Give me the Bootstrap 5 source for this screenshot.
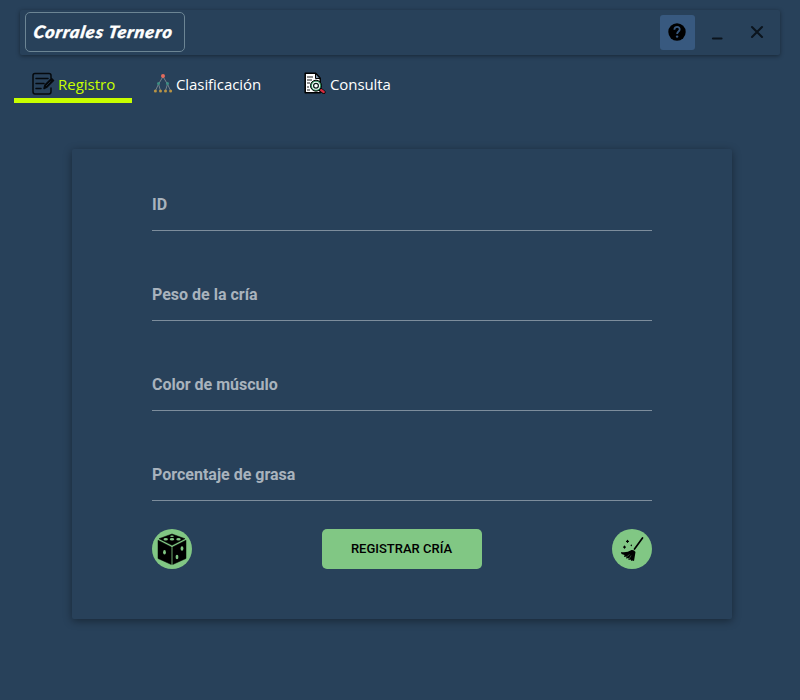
<!DOCTYPE html>
<html lang="es">
<head>
<meta charset="utf-8">
<meta name="viewport" content="width=device-width, initial-scale=1">
<title>Corrales Ternero</title>
<link href="https://cdn.jsdelivr.net/npm/bootstrap@5.3.0/dist/css/bootstrap.min.css" rel="stylesheet">
<style>
body{background:#28415a;font-family:Roboto,sans-serif;width:800px;height:700px;overflow:hidden}
.topbar{margin:10px 20px 0;height:45px;padding:2px 5px;border-radius:2px;box-shadow:0 1px 4px rgba(0,0,0,.4)}
.brand-box{width:160px;height:40px;border:1px solid #6c8594;border-radius:5px;padding:0 0 0 7px;color:#fff;font:italic 900 17px/38px Lato,sans-serif;letter-spacing:.9px;white-space:nowrap}
.brand-box span{display:inline-block;transform-origin:0 60%;transform:scaleX(1.06) skewX(-9deg);-webkit-text-stroke:.4px #fff}
.win-group{gap:5px;margin-top:3px}
.win-btn{width:35px;height:35px;padding:0;border:0;border-radius:3px}
.win-btn.help{background:#38597f;padding:0 1px 1px 0}
.tabs{margin:12px 0 0 14px;height:36px;font:15px/34px "Open Sans","Noto Sans",sans-serif}
.tab-item{color:#fff;height:36px;padding:0;border-radius:0;border-bottom:5px solid transparent}
.tab-item:hover{color:#fff}
.tab-item.active{color:#c8ff00;border-color:#c8ff00}
.tab-item span{padding-top:2px;line-height:32px}
.t2 span,.t3 span{letter-spacing:-.08px}
.tab-item svg{flex:none;margin-right:3px}
.t1{width:118px;padding-left:17px}.t2{width:150px;padding-left:21px}.t3{width:130px;padding-left:22px}
.t3 svg{margin-right:4px}
.form-panel{width:660px;height:470px;margin:46px 0 0 72px;padding:32px 80px 0;border-radius:2px;box-shadow:0 2px 9px rgba(0,0,0,.4)}
.line-field{height:50px;margin-bottom:40px;padding:0 0 2px;border:0;border-bottom:1px solid #7d8d9c;border-radius:0;background:transparent;color:#fff;font-weight:700;font-size:16px}
.line-field:focus{background:transparent;box-shadow:none;color:#fff}
.line-field::placeholder{color:#a9b3bd;opacity:1}
.last{margin-bottom:28px}
.round-btn{width:40px;height:40px;padding:0;border:0;background:#81c784}
.save-btn{width:160px;height:40px;border:0;border-radius:5px;background:#81c784;color:#000;font-weight:500;font-size:13px;padding:0 1px 0 0}
</style>
</head>
<body>
<header class="topbar d-flex align-items-start justify-content-between">
  <div class="brand-box"><span>Corrales Ternero</span></div>
  <div class="d-flex win-group">
    <button class="btn win-btn help d-flex align-items-center justify-content-center" aria-label="Ayuda"><svg width="19" height="19" viewBox="0 0 19 19"><circle cx="9" cy="9" r="8.7" fill="#000"/><path d="M6.4 6.700C6.300 2.700 12.100 3 11.700 6.600C11.500 8.500 9.100 8.700 9.100 10.900" fill="none" stroke="#38597f" stroke-width="1.8"/><circle cx="9.100" cy="13.600" r="1.2" fill="#38597f"/></svg></button>
    <button class="btn win-btn" aria-label="Minimizar"><svg class="d-block" width="35" height="35" viewBox="0 0 35 35"><path d="M13 23.500h8.500" stroke="#0b141d" stroke-width="2.200" stroke-linecap="round"/></svg></button>
    <button class="btn win-btn" aria-label="Cerrar"><svg class="d-block" width="35" height="35" viewBox="0 0 35 35"><path d="M12 12l10 10M22 12L12 22" stroke="#0b141d" stroke-width="2.100" stroke-linecap="round"/></svg></button>
  </div>
</header>
<nav class="tabs d-flex nav">
  <a class="nav-link tab-item active t1 d-flex align-items-center" href="#"><svg width="24" height="24" viewBox="0 0 24 24"><g fill="none" stroke="#05090d" stroke-width="1.500" stroke-linecap="round" stroke-linejoin="round"><path d="M20 7V4.500Q20 2.500 18 2.500H4Q2 2.500 2 4.500V20.500Q2 23 4 23H18Q20 23 20 20.500V17M5 7.500h12M5 12.500h8M5 17.500h5"/><path d="M13 17.500l1-3.500 6.500-6.500 2 2-6.500 6.500z" fill="#05090d"/></g><path d="M15 15l4.500-4.500" stroke="#28415a" stroke-width=".6"/></svg><span>Registro</span></a>
  <a class="nav-link tab-item t2 d-flex align-items-center" href="#"><svg width="20" height="20" viewBox="0 0 20 20"><g transform="translate(0 .6)"><path d="M10 3L5.500 10.500 2.500 17M5.500 10.500L7.500 17M10 3L14.500 10.500 12.500 17M14.500 10.500L17.500 17" fill="none" stroke="#73828b"/><circle cx="10" cy="2.500" r="2" fill="#e36b5d"/><g fill="#3c8e83"><circle cx="5.500" cy="10" r="1.500"/><circle cx="14.500" cy="10" r="1.500"/></g><g fill="#b99445"><circle cx="2.400" cy="17.300" r="1.500"/><circle cx="7.500" cy="17.300" r="1.500"/><circle cx="12.500" cy="17.300" r="1.500"/><circle cx="17.600" cy="17.300" r="1.500"/></g></g></svg><span>Clasificación</span></a>
  <a class="nav-link tab-item t3 d-flex align-items-center" href="#"><svg width="22" height="22" viewBox="0 0 22 22"><path d="M1.200 1.200h10.500l4.500 5v14.500H1.200z" fill="#fff" stroke="#000" stroke-width="1.500" stroke-linejoin="round"/><path d="M11.500 1.500v5h4.500z" fill="#8298ac" stroke="#000"/><path d="M3 5h6M3 8h5M3 11h3M3 15h2M3 18h3" stroke="#000" stroke-width=".9"/><path d="M16.200 17.500l3.600 2.700" stroke="#000" stroke-width="3.600" stroke-linecap="round"/><path d="M17 18l2.700 2" stroke="#d52c3f" stroke-width="2.300" stroke-linecap="round"/><circle cx="12" cy="13.700" r="5.500" fill="#3c9a69" stroke="#000"/><circle cx="12" cy="13.700" r="4" fill="#fff"/><circle cx="12" cy="13.700" r="2.400" fill="none" stroke="#061c17" stroke-width="1.200"/></svg><span>Consulta</span></a>
</nav>
<main class="form-panel">
  <input class="form-control line-field" placeholder="ID" aria-label="ID">
  <input class="form-control line-field" placeholder="Peso de la cría" aria-label="Peso de la cría">
  <input class="form-control line-field" placeholder="Color de músculo" aria-label="Color de músculo">
  <input class="form-control line-field last" placeholder="Porcentaje de grasa" aria-label="Porcentaje de grasa">
  <div class="d-flex justify-content-between">
    <button class="btn round-btn rounded-circle" aria-label="Valores al azar"><svg class="d-block" width="40" height="40" viewBox="0 0 40 40"><path d="M20 5L33 9.700 20 16.300 7 9.700zM6 11.200L19.300 18V35.500L6 29.500zM34 11.200L20.700 18V35.500L34 29.500z" stroke="#000" stroke-width=".5" stroke-linejoin="round"/><g fill="#81c784"><ellipse cx="20" cy="7.200" rx="1.800" ry=".8"/><ellipse cx="13.700" cy="10.300" rx="2.200" ry="1.200"/><ellipse cx="20" cy="10.300" rx="2.200" ry="1.200"/><ellipse cx="26.500" cy="10.300" rx="2.200" ry="1.200"/><ellipse cx="12.500" cy="23.300" rx="1.400" ry="2.300"/><ellipse cx="30" cy="19.500" rx="1.400" ry="2.200"/><ellipse cx="25" cy="28" rx="1.400" ry="2.200"/></g></svg></button>
    <button class="btn save-btn">REGISTRAR CRÍA</button>
    <button class="btn round-btn rounded-circle" aria-label="Limpiar"><svg class="d-block" width="40" height="40" viewBox="0 0 40 40"><path d="M30.500 9L22.500 20" stroke="#000" stroke-width="1.700" stroke-linecap="round"/><path d="M19.500 21Q22 20.500 23.500 23L22 32 20.500 31.500 19.500 32 18.500 30.500 16.500 31 16.500 29 14 29.500 14.500 27.500 12 28 12.500 26 9.500 25 9 23Q15 24 19.500 21z"/><path d="M14.500 28L17.500 25.500M17 30L19 26.500" stroke="#81c784" stroke-width=".4"/><g stroke="#000" stroke-linecap="round" stroke-width="1.300"><path d="M15.500 11.500v1.800M14.600 12.400h1.800M12.500 17.200v1.800M11.600 18.100h1.800"/><path d="M19.300 16.200v.3"/></g></svg></button>
  </div>
</main>
<script src="https://cdn.jsdelivr.net/npm/bootstrap@5.3.0/dist/js/bootstrap.bundle.min.js"></script>
</body>
</html>
